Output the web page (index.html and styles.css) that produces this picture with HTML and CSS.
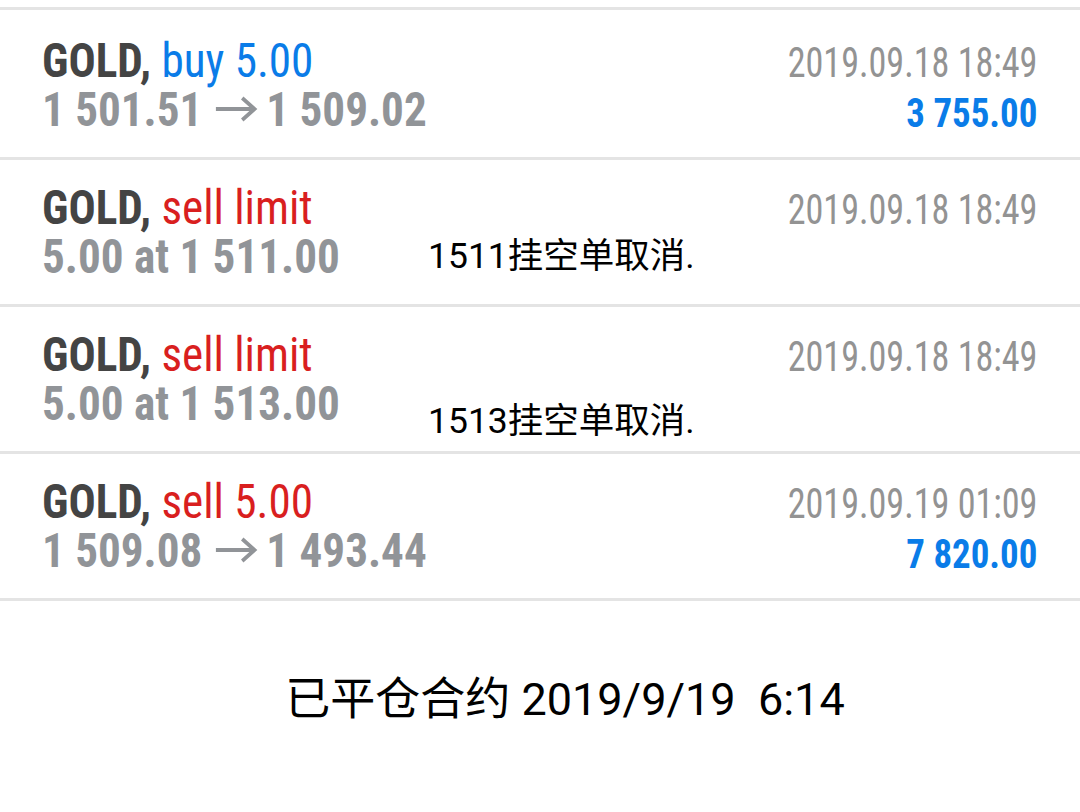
FILE: index.html
```html
<!DOCTYPE html>
<html lang="zh-CN">
<head>
  <meta charset="UTF-8" />
  <meta name="viewport" content="width=device-width, initial-scale=1.0"/>
  <title>History</title>
  <link rel="stylesheet" href="styles.css">
</head>
<body>

  <!-- Trade history list -->
  <div class="history">
    <div class="deal first">
      <div class="deal-left">
        <div class="deal-title"><b>GOLD,</b> <span class="buy">buy 5.00</span></div>
        <div class="deal-price">1 501.51 <svg class="arrow" viewBox="0 0 46 26"><path d="M1 13H42M29 2L42 13L29 24"/></svg> 1 509.02</div>
      </div>
      <div class="deal-right">
        <div class="deal-time">2019.09.18 18:49</div>
        <div class="deal-profit">3 755.00</div>
      </div>
    </div>

    <div class="deal">
      <div class="deal-left">
        <div class="deal-title"><b>GOLD,</b> <span class="sell">sell limit</span></div>
        <div class="deal-price">5.00 at 1 511.00</div>
      </div>
      <div class="deal-right">
        <div class="deal-time">2019.09.18 18:49</div>
      </div>
      <span class="note note-mid">1511挂空单取消.</span>
    </div>

    <div class="deal">
      <div class="deal-left">
        <div class="deal-title"><b>GOLD,</b> <span class="sell">sell limit</span></div>
        <div class="deal-price">5.00 at 1 513.00</div>
      </div>
      <div class="deal-right">
        <div class="deal-time">2019.09.18 18:49</div>
      </div>
      <span class="note note-low">1513挂空单取消.</span>
    </div>

    <div class="deal">
      <div class="deal-left">
        <div class="deal-title"><b>GOLD,</b> <span class="sell">sell 5.00</span></div>
        <div class="deal-price">1 509.08 <svg class="arrow" viewBox="0 0 46 26"><path d="M1 13H42M29 2L42 13L29 24"/></svg> 1 493.44</div>
      </div>
      <div class="deal-right">
        <div class="deal-time">2019.09.19 01:09</div>
        <div class="deal-profit">7 820.00</div>
      </div>
    </div>
  </div>

  <p class="caption">已平仓合约 2019/9/19&nbsp;&nbsp;6:14</p>

</body>
</html>
```

FILE: styles.css
```css
body {
  margin: 0;
  background: #fff;
  font-family: "Roboto Condensed", Roboto, sans-serif;
  font-stretch: condensed;
}

/* List rows with grey rules between them */
.history {
  padding-top: 7px;
}

.deal {
  position: relative;
  display: flex;
  justify-content: space-between;
  height: 144px;
  padding: 0 43px 0 42px;
  border-top: 3px solid #e4e4e4;
}

.deal:last-child {
  border-bottom: 3px solid #e4e4e4;
}

.deal.first {
  height: 147px;
}

.deal-left,
.deal-right {
  padding-top: 23px;
}

.deal.first .deal-left,
.deal.first .deal-right {
  padding-top: 26px;
}

/* the app font is narrower than Roboto Condensed */
.deal-left {
  transform: scaleX(0.94);
  transform-origin: left top;
  white-space: nowrap;
}

.deal-title {
  font-size: 48px;
  line-height: 49px;
  color: #444;
}

.deal-title b {
  font-weight: 700;
}

.buy {
  color: #0a7ce8;
}

.sell {
  color: #d91f1f;
}

.deal-price {
  font-size: 48px;
  line-height: 49px;
  font-weight: 700;
  color: #919498;
}

.arrow {
  width: 46px;
  height: 26px;
  margin: 0 -2px 0 2px;
  vertical-align: 4px;
  fill: none;
  stroke: #919498;
  stroke-width: 4;
}

.deal-right {
  text-align: right;
  white-space: nowrap;
}

.deal-right,
.deal.first .deal-right {
  margin-top: 2px;
}

.deal-time {
  font-size: 42px;
  line-height: 49px;
  color: #939393;
  transform: scaleX(0.86);
  transform-origin: right top;
}

.deal-profit {
  margin-top: 2px;
  font-size: 41px;
  line-height: 49px;
  font-weight: 700;
  color: #0a7ce8;
  transform: scaleX(0.9);
  transform-origin: right top;
}

/* hand-written remarks on the pending orders */
.note {
  position: absolute;
  left: 428px;
  font-family: Roboto, "Noto Sans CJK SC", sans-serif;
  font-stretch: normal;
  font-size: 35.5px;
  line-height: 40px;
  color: #000;
}

.note-mid {
  top: 76px;
}

.note-low {
  top: 94px;
}

.caption {
  margin: 62px 0 0;
  padding-left: 50px;
  text-align: center;
  font-family: Roboto, "Noto Sans CJK SC", sans-serif;
  font-stretch: normal;
  font-size: 45px;
  color: #000;
}
```
